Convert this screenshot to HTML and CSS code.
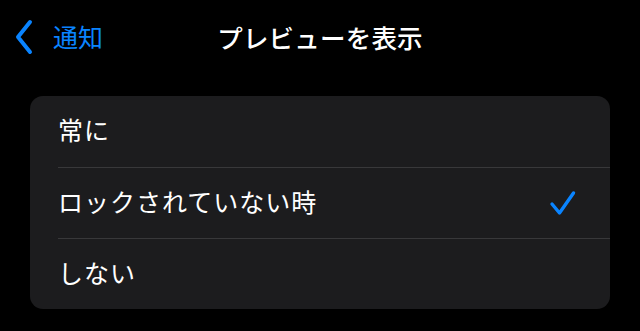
FILE: index.html
```html
<!DOCTYPE html>
<html lang="ja">
<head>
<meta charset="utf-8">
<link rel="stylesheet" href="styles.css">
</head>
<body>
<header class="nav">
  <a class="back">
    <svg class="chev" width="18" height="36" viewBox="0 0 18 36"><path d="M15 3 L3 18 L15 33" fill="none" stroke="#0a84ff" stroke-width="4" stroke-linecap="round" stroke-linejoin="round"/></svg>
    <span class="back-label">通知</span>
  </a>
  <h1 class="title">プレビューを表示</h1>
</header>
<ul class="card">
  <li class="row"><span class="label">常に</span></li>
  <li class="row"><span class="label">ロックされていない時</span>
    <svg class="check" width="28" height="26" viewBox="0 0 28 26"><path d="M3 14 L10.5 23 L24.5 3" fill="none" stroke="#0a84ff" stroke-width="3.4" stroke-linecap="round" stroke-linejoin="round"/></svg>
  </li>
  <li class="row"><span class="label">しない</span></li>
</ul>
</body>
</html>
```
FILE: styles.css
```css
html, body {
  margin: 0;
  padding: 0;
  background: #000;
  width: 640px;
  height: 331px;
  overflow: hidden;
  font-family: "Noto Sans CJK JP", "Noto Sans", sans-serif;
  color: #fff;
}
.nav {
  position: relative;
  height: 74px;
  display: flex;
  align-items: center;
  justify-content: center;
}
.back {
  position: absolute;
  left: 15px;
  top: 0;
  height: 74px;
  display: flex;
  align-items: center;
  gap: 20px;
  color: #0a84ff;
  font-size: 25px;
}
.back-label { line-height: 1; padding-bottom: 2px; }
.title {
  margin: 0;
  font-size: 25.5px;
  font-weight: 500;
  line-height: 1;
  letter-spacing: 0.2px;
  padding-bottom: 1px;
}
.card {
  list-style: none;
  margin: 22px 30px 0 30px;
  padding: 0;
  background: #1c1c1e;
  border-radius: 13px;
  overflow: hidden;
}
.row {
  margin-left: 28px;
  padding-right: 33px;
  height: 71px;
  display: flex;
  align-items: center;
  justify-content: space-between;
  box-sizing: border-box;
}
.row + .row {
  border-top: 1px solid #38383a;
}
.label {
  font-size: 25px;
  line-height: 1;
  letter-spacing: 1px;
  padding-bottom: 4px;
}
```
